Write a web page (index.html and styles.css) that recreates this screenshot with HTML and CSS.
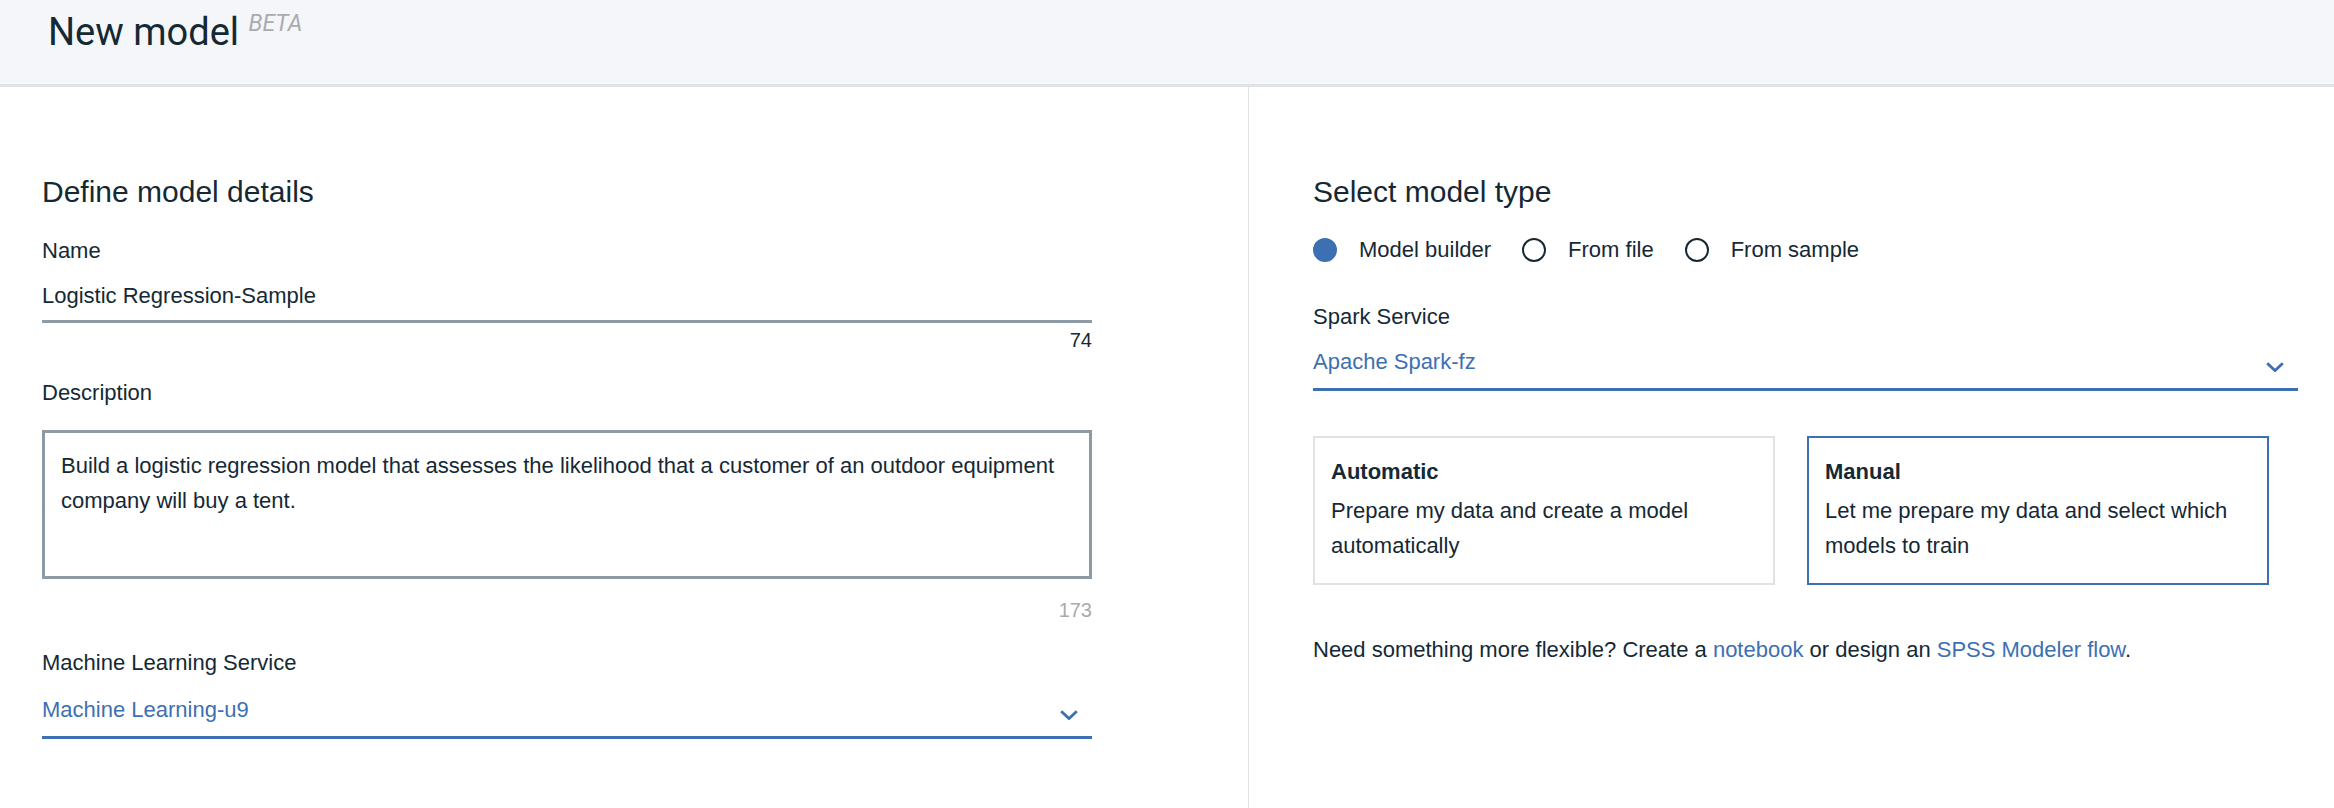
FILE: index.html
```html
<!DOCTYPE html>
<html lang="en">
<head>
<meta charset="utf-8">
<title>New model</title>
<link rel="stylesheet" href="styles.css">
</head>
<body>
<header class="page-header">
  <h1 class="page-title">New model <span class="beta">BETA</span></h1>
</header>
<main class="layout">
  <section class="panel panel-left">
    <h2 class="section-title">Define model details</h2>
    <div class="field-label label-name">Name</div>
    <div class="text-input">Logistic Regression-Sample</div>
    <div class="counter">74</div>

    <div class="field-label label-desc">Description</div>
    <div class="text-area">Build a logistic regression model that assesses the likelihood that a customer of an outdoor equipment company will buy a tent.</div>
    <div class="counter counter-muted">173</div>

    <div class="field-label label-ml">Machine Learning Service</div>
    <div class="select select-ml">
      <span class="select-value">Machine Learning-u9</span>
      <svg class="chevron" width="18" height="10" viewBox="0 0 18 10"><polyline points="1.2,1.2 9,8.6 16.8,1.2" fill="none" stroke="#3d70b2" stroke-width="2.8"/></svg>
    </div>
  </section>

  <section class="panel panel-right">
    <h2 class="section-title">Select model type</h2>
    <div class="radio-row">
      <span class="radio radio-on"></span><span class="radio-label">Model builder</span>
      <span class="radio"></span><span class="radio-label">From file</span>
      <span class="radio"></span><span class="radio-label">From sample</span>
    </div>

    <div class="field-label label-spark">Spark Service</div>
    <div class="select select-spark">
      <span class="select-value">Apache Spark-fz</span>
      <svg class="chevron" width="18" height="10" viewBox="0 0 18 10"><polyline points="1.2,1.2 9,8.6 16.8,1.2" fill="none" stroke="#3d70b2" stroke-width="2.8"/></svg>
    </div>

    <div class="cards">
      <div class="card">
        <div class="card-title">Automatic</div>
        <div class="card-text">Prepare my data and create a model automatically</div>
      </div>
      <div class="card card-selected">
        <div class="card-title">Manual</div>
        <div class="card-text">Let me prepare my data and select which models to train</div>
      </div>
    </div>

    <p class="note">Need something more flexible? Create a <a href="#" class="link">notebook</a> or design an <a href="#" class="link">SPSS Modeler flow</a>.</p>
  </section>
</main>
</body>
</html>
```

FILE: styles.css
```css
* { box-sizing: border-box; }

html, body {
  margin: 0;
  padding: 0;
  background: #ffffff;
}

body {
  font-family: "Liberation Sans", Arial, sans-serif;
  font-size: 22px;
  color: #152935;
  width: 2334px;
  height: 808px;
  overflow: hidden;
}

.page-header {
  height: 87px;
  background: #f4f6fa;
  border-bottom: 3px solid #dfe3e6;
  padding: 2px 0 0 48px;
}

.page-title {
  margin: 0;
  font-family: Roboto, "Liberation Sans", sans-serif;
  font-weight: 400;
  font-size: 38px;
  line-height: 44px;
  color: #152935;
}

.beta {
  font-size: 23px;
  font-style: italic;
  color: #a9abad;
  vertical-align: 14px;
}

.layout {
  display: grid;
  grid-template-columns: 1249px 1fr;
  height: 721px;
}

.panel {
  padding-top: 87px;
}

.panel-left {
  border-right: 1px solid #dfe3e6;
  padding-left: 42px;
  padding-right: 156px;
}

.panel-right {
  padding-left: 64px;
  padding-right: 36px;
}

.section-title {
  margin: 0;
  font-size: 30px;
  line-height: 36px;
  font-weight: 400;
  color: #152935;
}

.field-label {
  line-height: 32px;
  color: #152935;
}

.label-name { margin-top: 25px; }
.label-desc { margin-top: 25px; }
.label-ml { margin-top: 25px; }
.label-spark { margin-top: 35px; }

.text-input {
  margin-top: 13px;
  line-height: 32px;
  padding-bottom: 8px;
  border-bottom: 3px solid #8c9ba5;
}

.counter {
  margin-top: 5px;
  font-size: 20px;
  line-height: 24px;
  text-align: right;
  color: #152935;
}

.counter-muted {
  margin-top: 19px;
  color: #a8aaac;
}

.text-area {
  margin-top: 21px;
  height: 149px;
  border: 3px solid #8c9ba5;
  padding: 15px 16px;
  line-height: 35px;
}

.select {
  display: flex;
  justify-content: space-between;
  align-items: flex-start;
  line-height: 32px;
  padding-bottom: 10px;
  border-bottom: 3px solid #3d70b2;
  color: #3d70b2;
}

.select-ml { margin-top: 15px; }
.select-spark { margin-top: 13px; }

.chevron {
  display: block;
  margin-top: 16px;
  margin-right: 14px;
}

.radio-row {
  margin-top: 24px;
  height: 32px;
  display: flex;
  align-items: center;
  line-height: 32px;
}

.radio {
  width: 24px;
  height: 24px;
  border-radius: 50%;
  border: 2px solid #152935;
  margin-right: 22px;
  flex: none;
}

.radio-on {
  background: #3d70b2;
  border-color: #3d70b2;
}

.radio-label {
  margin-right: 31px;
}

.cards {
  margin-top: 45px;
  display: flex;
  gap: 32px;
}

.card {
  width: 462px;
  height: 149px;
  border: 2px solid #dfe3e6;
  padding: 18px 16px;
}

.card-selected {
  border-color: #3d70b2;
}

.card-title {
  font-weight: 700;
  line-height: 32px;
}

.card-text {
  margin-top: 5px;
  line-height: 35px;
}

.note {
  margin: 49px 0 0;
  line-height: 32px;
}

.link {
  color: #3d70b2;
  text-decoration: none;
}
```
